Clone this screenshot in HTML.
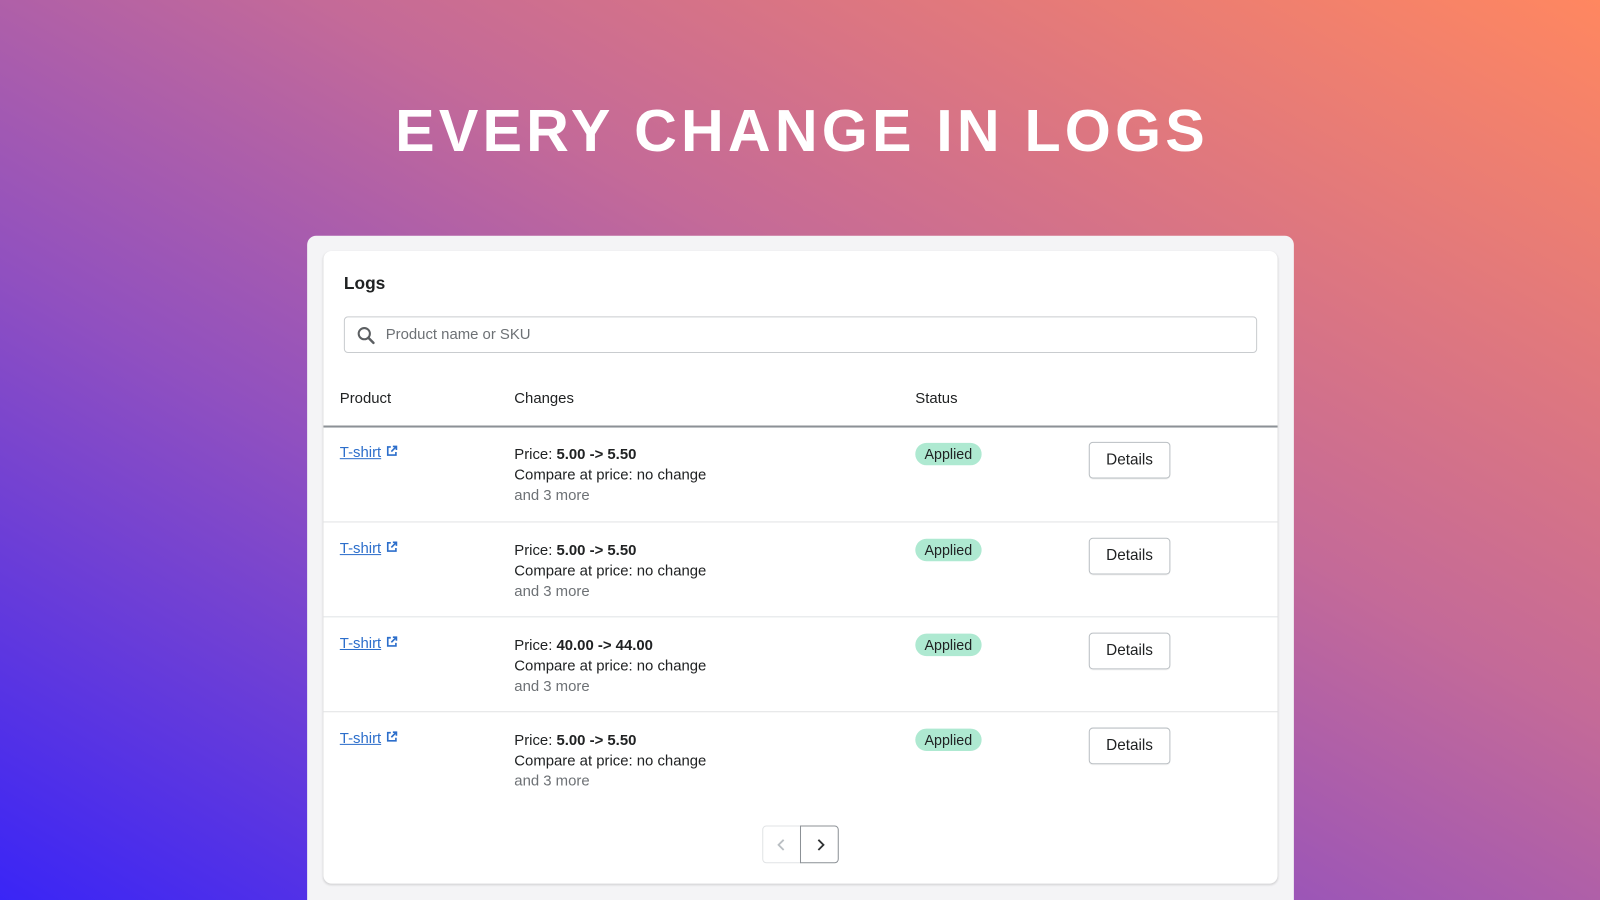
<!DOCTYPE html>
<html style="background:#5a3ad8"><head><style>
*{margin:0;padding:0;box-sizing:border-box}
html,body{width:1600px;height:900px;overflow:hidden}
body{position:relative;font-family:"Liberation Sans",sans-serif;
background:linear-gradient(to top right,#3a25f6 0%,#9050c0 35%,#c46a98 60%,#ff8760 100%);}
.wrap{position:absolute;left:0;top:0;width:1568px;height:882px;transform:scale(1.0204);transform-origin:0 0;overflow:hidden}
h1{position:absolute;top:95px;left:0;width:1572px;text-align:center;color:#fff;font-size:58px;font-weight:bold;letter-spacing:4.1px;}
.outer{position:absolute;left:301px;top:231px;width:967px;height:660px;background:#f4f4f6;border-radius:9px 9px 0 0}
.card{position:absolute;left:317px;top:246px;width:935px;height:620px;background:#fff;border-radius:8px;box-shadow:0 1px 2px rgba(0,0,0,.15)}
.t{position:absolute;font-size:14.6px;color:#202223}
.search{position:absolute;left:20px;top:64px;width:895px;height:36px;border:1px solid #c9cccf;border-radius:4px}
.row{position:absolute;left:0;width:935px;height:93px;border-top:1px solid #e1e3e5}
.link{color:#2c6ecb;text-decoration:underline}
.badge{position:absolute;left:580px;top:16px;background:#aee9d1;border-radius:11px;padding:3px 9px;font-size:14px;color:#202223}
.btn{position:absolute;left:750px;top:15px;width:80px;height:36px;border:1px solid #babfc3;border-radius:4px;font-size:15px;text-align:center;line-height:34px;color:#202223;box-shadow:0 1px 0 rgba(0,0,0,.05)}
.b{font-weight:bold}
.g{color:#6d7175}
</style></head><body>
<div class="wrap">
<h1>EVERY CHANGE IN LOGS</h1>
<div class="outer"></div>
<div class="card">
<div class="t" style="left:20px;top:22px;font-size:17px;font-weight:bold">Logs</div>
<div class="search">
<svg style="position:absolute;left:11px;top:8px" width="20" height="20" viewBox="0 0 20 20"><circle cx="8" cy="8" r="5.5" fill="none" stroke="#5c5f62" stroke-width="2"/><path d="M12 12l5 5" stroke="#5c5f62" stroke-width="2.4" stroke-linecap="round"/></svg>
<div class="t" style="left:40px;top:9px;color:#6d7175">Product name or SKU</div>
</div>
<div class="t" style="left:16px;top:137px">Product</div>
<div class="t" style="left:187px;top:137px">Changes</div>
<div class="t" style="left:580px;top:137px">Status</div>
<div style="position:absolute;left:0;top:171px;width:935px;height:2px;background:#8c9196"></div>
<div class="row" style="top:172px;border-top:none">
<div class="t" style="left:16px;top:18px"><span class="link">T-shirt</span> <svg width="12" height="12" viewBox="0 0 12 12"><path d="M5 2H2v8h8V7M7 1.5h3.5V5M10.5 1.5L5.5 6.5" fill="none" stroke="#2c6ecb" stroke-width="1.6"/></svg></div>
<div class="t" style="left:187px;top:18px;line-height:20px">Price: <span class="b">5.00 -&gt; 5.50</span><br>Compare at price: no change<br><span class="g">and 3 more</span></div>
<div class="badge">Applied</div><div class="btn">Details</div></div>
<div class="row" style="top:265px">
<div class="t" style="left:16px;top:18px"><span class="link">T-shirt</span> <svg width="12" height="12" viewBox="0 0 12 12"><path d="M5 2H2v8h8V7M7 1.5h3.5V5M10.5 1.5L5.5 6.5" fill="none" stroke="#2c6ecb" stroke-width="1.6"/></svg></div>
<div class="t" style="left:187px;top:18px;line-height:20px">Price: <span class="b">5.00 -&gt; 5.50</span><br>Compare at price: no change<br><span class="g">and 3 more</span></div>
<div class="badge">Applied</div><div class="btn">Details</div></div>
<div class="row" style="top:358px">
<div class="t" style="left:16px;top:18px"><span class="link">T-shirt</span> <svg width="12" height="12" viewBox="0 0 12 12"><path d="M5 2H2v8h8V7M7 1.5h3.5V5M10.5 1.5L5.5 6.5" fill="none" stroke="#2c6ecb" stroke-width="1.6"/></svg></div>
<div class="t" style="left:187px;top:18px;line-height:20px">Price: <span class="b">40.00 -&gt; 44.00</span><br>Compare at price: no change<br><span class="g">and 3 more</span></div>
<div class="badge">Applied</div><div class="btn">Details</div></div>
<div class="row" style="top:451px">
<div class="t" style="left:16px;top:18px"><span class="link">T-shirt</span> <svg width="12" height="12" viewBox="0 0 12 12"><path d="M5 2H2v8h8V7M7 1.5h3.5V5M10.5 1.5L5.5 6.5" fill="none" stroke="#2c6ecb" stroke-width="1.6"/></svg></div>
<div class="t" style="left:187px;top:18px;line-height:20px">Price: <span class="b">5.00 -&gt; 5.50</span><br>Compare at price: no change<br><span class="g">and 3 more</span></div>
<div class="badge">Applied</div><div class="btn">Details</div></div>
<div style="position:absolute;left:430px;top:563px;width:38px;height:37px;border:1px solid #e1e3e5;border-radius:4px 0 0 4px"><svg style="position:absolute;left:12px;top:11px" width="12" height="14" viewBox="0 0 12 14"><path d="M8 2L3 7l5 5" fill="none" stroke="#babfc3" stroke-width="1.8"/></svg></div>
<div style="position:absolute;left:467px;top:563px;width:38px;height:37px;border:1px solid #8c9196;border-radius:0 4px 4px 0"><svg style="position:absolute;left:13px;top:11px" width="12" height="14" viewBox="0 0 12 14"><path d="M4 2l5 5-5 5" fill="none" stroke="#303234" stroke-width="1.8"/></svg></div>
</div>
</div>
</body></html>
